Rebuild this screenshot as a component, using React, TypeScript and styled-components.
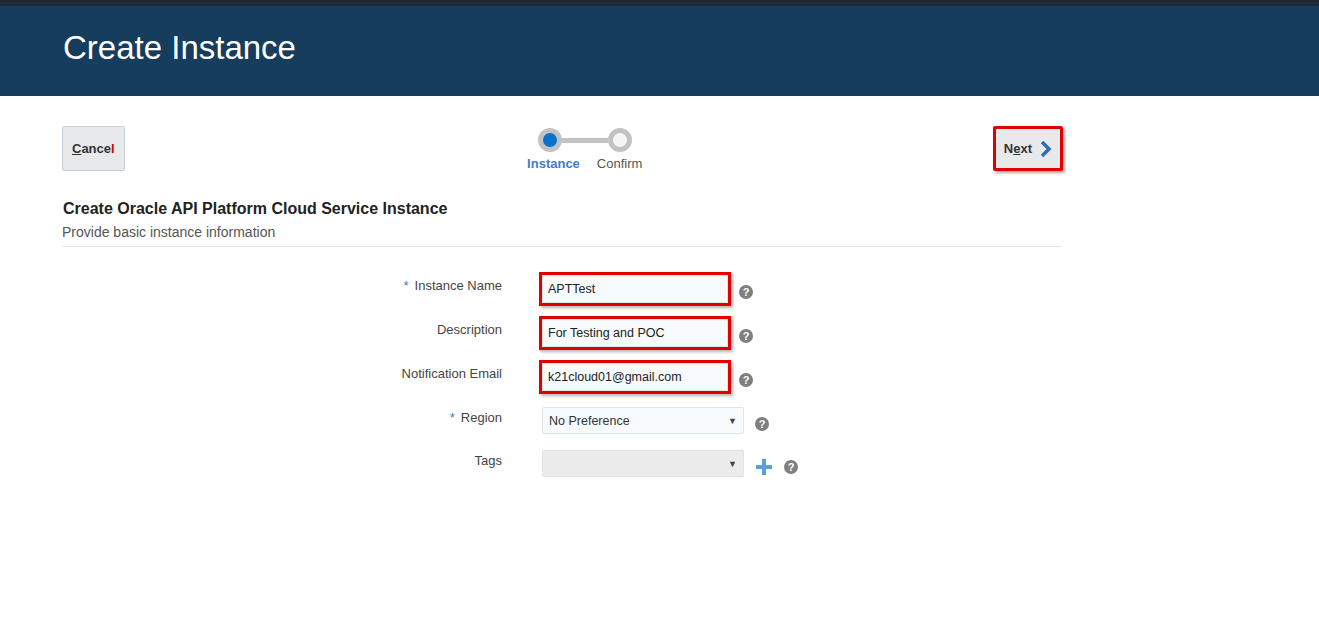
import React from "react";
import styled, { createGlobalStyle } from "styled-components";

const Global = createGlobalStyle`
  body { margin: 0; font-family: "Liberation Sans", Arial, sans-serif; background: #fff; }
`;

const TopStrip = styled.div`height: 6px; background: #1f2a36;`;
const Header = styled.header`
  height: 90px; background: #163c5e; display: flex; align-items: center; padding-left: 63px;
`;
const Title = styled.h1`margin: 0 0 6px; font-weight: 400; font-size: 33px; color: #fff;`;

const Body = styled.div`width: 1000px; margin-left: 62px;`;

const TrainBar = styled.div`
  display: flex; justify-content: space-between; align-items: flex-start; margin-top: 30px; height: 46px;
`;
const Button = styled.button<{ $hl?: boolean }>`
  height: 45px; padding: 0 ${p => (p.$hl ? "8px" : "9px")};
  background: #e8e9eb; border: ${p => (p.$hl ? "3px solid #e00000" : "1px solid #c4ced7")};
  border-radius: 2px; font-family: inherit; font-size: 13px; font-weight: 700; color: #333;
  display: flex; align-items: center; gap: 8px;
  box-shadow: ${p => (p.$hl ? "2px 2px 3px rgba(0,0,0,0.35)" : "none")};
  ${p => (p.$hl ? "margin-right: -1px;" : "")}
`;
const U = styled.span`text-decoration: underline;`;
const Red = styled.span`color: #c00;`;

const Train = styled.div`display: flex; flex-direction: column; align-items: center; margin-left: 52px;`;
const Dots = styled.div`display: flex; align-items: center; margin-top: 2px;`;
const Dot = styled.div<{ $active?: boolean }>`
  width: 14px; height: 14px; border-radius: 50%; border: 5px solid #c2c2c2;
  background: ${p => (p.$active ? "#0572ce" : "#f5f5f5")};
`;
const Link = styled.div`width: 46px; height: 5px; background: #c2c2c2;`;
const StepLabels = styled.div`display: flex; gap: 17px; margin-top: 4px; font-size: 13px;`;
const StepLabel = styled.span<{ $active?: boolean }>`
  color: ${p => (p.$active ? "#3f7dc8" : "#555")}; font-weight: ${p => (p.$active ? 700 : 400)};
`;

const Section = styled.div`
  margin-top: 28px; border-bottom: 1px solid #dfe4e7; padding-bottom: 6px;
`;
const SectionTitle = styled.div`font-size: 16px; font-weight: 700; color: #222; margin-left: 1px;`;
const SectionSub = styled.div`font-size: 14px; color: #555; margin-top: 6px;`;

const Form = styled.div`display: grid; grid-template-columns: 440px auto; row-gap: 16px; column-gap: 40px; margin-top: 28px;`;
const Label = styled.div`text-align: right; font-size: 13px; color: #444; padding-top: 3px;`;
const Star = styled.span`color: #3f7dc8; margin-right: 6px;`;
const Field = styled.div`display: flex; align-items: center; gap: 6px;`;
const Box = styled.div<{ $hl?: boolean }>`
  width: 186px; height: 28px; border: 3px solid ${p => (p.$hl ? "#e00000" : "transparent")};
  margin: -3px; box-shadow: ${p => (p.$hl ? "2px 2px 3px rgba(0,0,0,0.3)" : "none")};
  display: flex;
`;
const Input = styled.div`
  flex: 1; background: #f7fbfd; border: 1px solid #dfe4e7; border-radius: 2px; font-size: 12.5px;
  color: #222; display: flex; align-items: center; padding-left: 5px;
`;
const Select = styled.div<{ $gray?: boolean }>`
  width: 188px; height: 25px; background: ${p => (p.$gray ? "#ececed" : "#f7fbfd")};
  border: 1px solid #dfe4e7; border-radius: 2px; font-size: 12.5px; color: #333;
  display: flex; align-items: center; justify-content: space-between; padding: 0 6px;
`;
const Caret = styled.span`font-size: 9px; color: #444;`;
const Help = styled.span`
  width: 14px; height: 14px; border-radius: 50%; background: #7f7f7f; color: #fff; font-size: 11px;
  font-weight: 700; display: inline-flex; align-items: center; justify-content: center; margin-top: 6px; margin-left: 5px;
`;

const Chevron = () => (
  <svg width="12" height="18" viewBox="0 0 12 18"><path d="M2 2 L9 9 L2 16" fill="none" stroke="#2f6db5" strokeWidth="3.5" /></svg>
);
const Plus = () => (
  <svg width="18" height="18" viewBox="0 0 18 18" style={{ marginTop: 6, marginLeft: 5 }}><path d="M9 1 V17 M1 9 H17" stroke="#5a9fd8" strokeWidth="4" /></svg>
);

export default function App() {
  return (
    <>
      <Global />
      <TopStrip />
      <Header><Title>Create Instance</Title></Header>
      <Body>
        <TrainBar>
          <Button><span><U>C</U>ance<Red>l</Red></span></Button>
          <Train>
            <Dots><Dot $active /><Link /><Dot /></Dots>
            <StepLabels><StepLabel $active>Instance</StepLabel><StepLabel>Confirm</StepLabel></StepLabels>
          </Train>
          <Button $hl><span>N<U>e</U>xt</span><Chevron /></Button>
        </TrainBar>
        <Section>
          <SectionTitle>Create Oracle API Platform Cloud Service Instance</SectionTitle>
          <SectionSub>Provide basic instance information</SectionSub>
        </Section>
        <Form>
          <Label><Star>*</Star>Instance Name</Label>
          <Field><Box $hl><Input>APTTest</Input></Box><Help>?</Help></Field>
          <Label>Description</Label>
          <Field><Box $hl><Input>For Testing and POC</Input></Box><Help>?</Help></Field>
          <Label>Notification Email</Label>
          <Field><Box $hl><Input>k21cloud01@gmail.com</Input></Box><Help>?</Help></Field>
          <Label><Star>*</Star>Region</Label>
          <Field><Select>No Preference<Caret>▼</Caret></Select><Help>?</Help></Field>
          <Label>Tags</Label>
          <Field><Select $gray><span /><Caret>▼</Caret></Select><Plus /><Help>?</Help></Field>
        </Form>
      </Body>
    </>
  );
}
